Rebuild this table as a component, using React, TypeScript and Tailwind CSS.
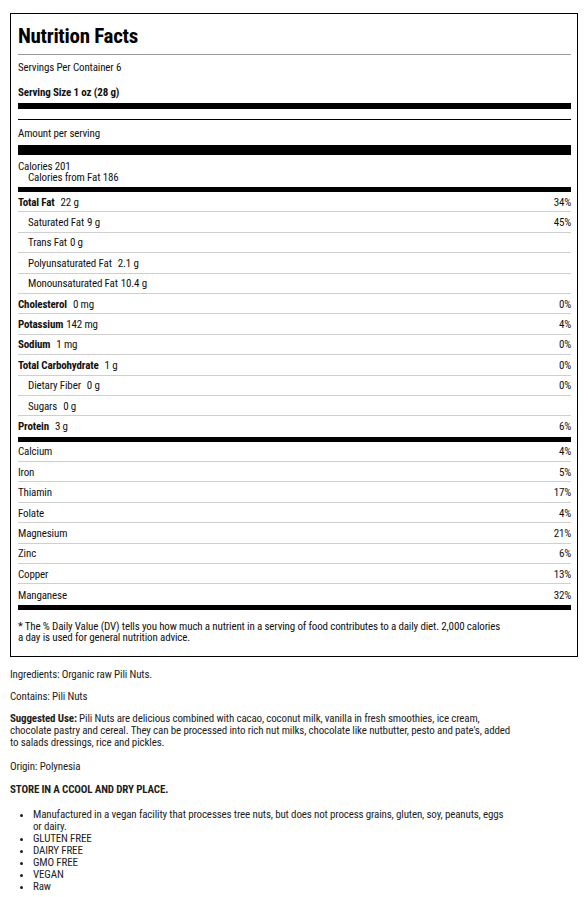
type Row = {
  label: string;
  amount?: string;
  dv?: string;
  bold?: boolean;
  sub?: boolean;
  wide?: boolean;
};

const nutrients: Row[] = [
  { label: "Total Fat", amount: "22 g", dv: "34%", bold: true, wide: true },
  { label: "Saturated Fat", amount: "9 g", dv: "45%", sub: true },
  { label: "Trans Fat", amount: "0 g", sub: true },
  { label: "Polyunsaturated Fat", amount: "2.1 g", sub: true, wide: true },
  { label: "Monounsaturated Fat", amount: "10.4 g", sub: true },
  { label: "Cholesterol", amount: "0 mg", dv: "0%", bold: true, wide: true },
  { label: "Potassium", amount: "142 mg", dv: "4%", bold: true },
  { label: "Sodium", amount: "1 mg", dv: "0%", bold: true, wide: true },
  { label: "Total Carbohydrate", amount: "1 g", dv: "0%", bold: true, wide: true },
  { label: "Dietary Fiber", amount: "0 g", dv: "0%", sub: true, wide: true },
  { label: "Sugars", amount: "0 g", sub: true, wide: true },
  { label: "Protein", amount: "3 g", dv: "6%", bold: true, wide: true },
];

const vitamins: Row[] = [
  { label: "Calcium", dv: "4%" },
  { label: "Iron", dv: "5%" },
  { label: "Thiamin", dv: "17%" },
  { label: "Folate", dv: "4%" },
  { label: "Magnesium", dv: "21%" },
  { label: "Zinc", dv: "6%" },
  { label: "Copper", dv: "13%" },
  { label: "Manganese", dv: "32%" },
];

function FactRow({ row, last }: { row: Row; last: boolean }) {
  return (
    <div
      className={`flex h-[20.4px] items-center justify-between pt-[2px] ${
        last ? "" : "border-b border-[#cfcfcf]"
      }`}
    >
      <span className={row.sub ? "pl-[10px]" : ""}>
        <span className={row.bold ? "font-bold" : ""}>{row.label}</span>
        {row.amount && (
          <span className={row.wide ? "ml-[6px]" : "ml-[3px]"}>{row.amount}</span>
        )}
      </span>
      <span>{row.dv}</span>
    </div>
  );
}

export default function App() {
  return (
    <div className="bg-white pt-[13px] pb-[5px] font-['Roboto_Condensed','Liberation_Sans_Narrow',Roboto,sans-serif] font-stretch-condensed text-[11px] leading-[12px] tracking-[-0.15px] text-[#111]">
      <div className="ml-[10px] w-[568px] border border-black pt-[9px] pb-[13px] pl-[7px] pr-[6px]">
        <h1 className="h-[26px] text-[21px] leading-[26px] font-bold tracking-[-0.3px] text-black">
          Nutrition Facts
        </h1>
        <div className="mt-[5px] h-px bg-[#9a9a9a]" />
        <p className="mt-[7px]">Servings Per Container 6</p>
        <p className="mt-[13px] font-bold">Serving Size 1 oz (28 g)</p>
        <div className="mt-[4px] h-[6px] bg-black" />
        <div className="mt-[10px] h-px bg-black" />
        <p className="mt-[8px]">Amount per serving</p>
        <div className="mt-[5px] h-[10px] bg-black" />
        <div className="mt-[6px] leading-[11px]">
          <p>Calories 201</p>
          <p className="pl-[10px]">Calories from Fat 186</p>
        </div>
        <div className="mt-[4px] h-[5px] bg-black" />
        {nutrients.map((r, i) => (
          <FactRow key={r.label} row={r} last={i === nutrients.length - 1} />
        ))}
        <div className="h-[5px] bg-black" />
        {vitamins.map((r, i) => (
          <FactRow key={r.label} row={r} last={i === vitamins.length - 1} />
        ))}
        <div className="h-[5px] bg-black" />
        <p className="mt-[11.5px] leading-[11px]">
          * The % Daily Value (DV) tells you how much a nutrient in a serving of food
          contributes to a daily diet. 2,000 calories
          <br />a day is used for general nutrition advice.
        </p>
      </div>

      <div className="ml-[10px] text-[#1e1e1e]">
        <p className="mt-[12px]">Ingredients: Organic raw Pili Nuts.</p>
        <p className="mt-[10px]">Contains: Pili Nuts</p>
        <p className="mt-[10px]">
          <span className="font-bold">Suggested Use:</span> Pili Nuts are delicious
          combined with cacao, coconut milk, vanilla in fresh smoothies, ice cream,
          <br />
          chocolate pastry and cereal. They can be processed into rich nut milks,
          chocolate like nutbutter, pesto and pate's, added
          <br />
          to salads dressings, rice and pickles.
        </p>
        <p className="mt-[12px]">Origin: Polynesia</p>
        <p className="mt-[11px] font-bold">STORE IN A CCOOL AND DRY PLACE.</p>
        <ul className="mt-[13px] list-disc pl-[23px]">
          <li>
            Manufactured in a vegan facility that processes tree nuts, but does not
            process grains, gluten, soy, peanuts, eggs
            <br />
            or dairy.
          </li>
          <li>GLUTEN FREE</li>
          <li>DAIRY FREE</li>
          <li>GMO FREE</li>
          <li>VEGAN</li>
          <li>Raw</li>
        </ul>
      </div>
    </div>
  );
}
